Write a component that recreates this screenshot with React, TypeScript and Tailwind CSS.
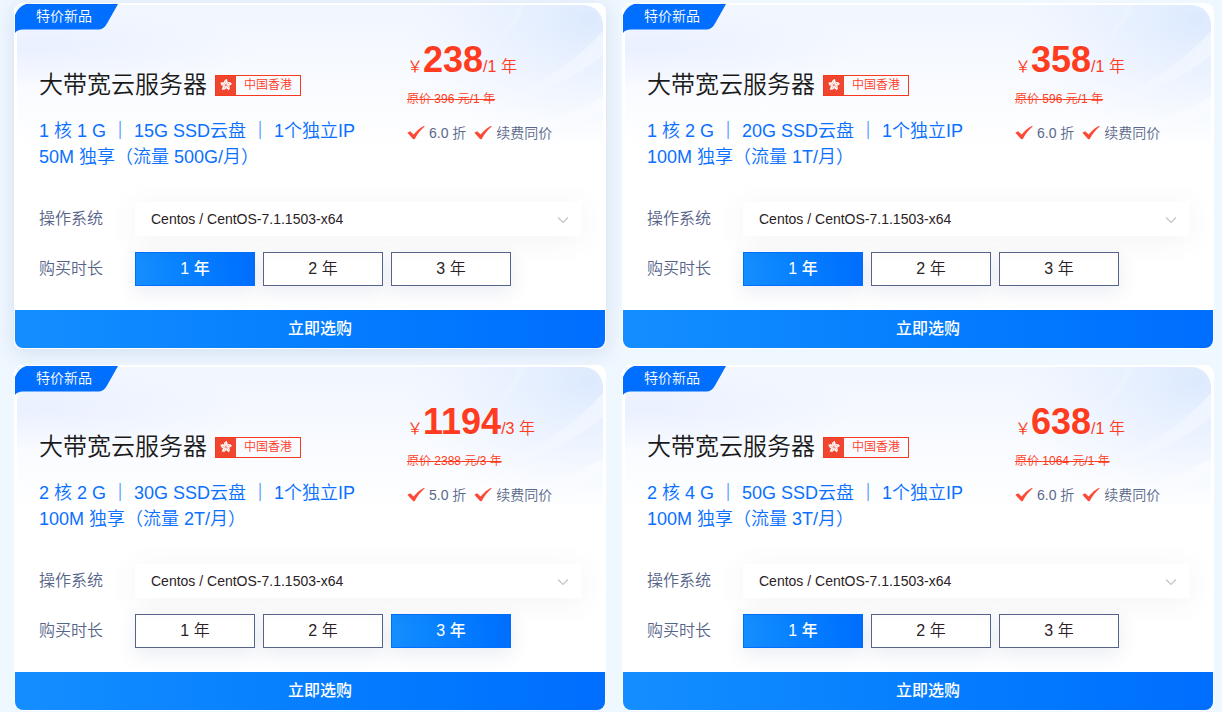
import { useId, useState } from "react";

type Plan = {
    /** Price of the plan. */
    price: number,
    /** Price before the discount. */
    original: number,
    /** Years that are selected at first. */
    years: number,
    discount: string,
    specs: string[],
    traffic: string,
    /** Lifted off the page with a stronger shadow. */
    raised?: boolean,
}

const plans: Plan[] = [
    { price: 238, original: 396, years: 1, discount: "6.0", specs: ["1 核 1 G", "15G SSD云盘", "1个独立IP"], traffic: "50M 独享（流量 500G/月）", raised: true },
    { price: 358, original: 596, years: 1, discount: "6.0", specs: ["1 核 2 G", "20G SSD云盘", "1个独立IP"], traffic: "100M 独享（流量 1T/月）" },
    { price: 1194, original: 2388, years: 3, discount: "5.0", specs: ["2 核 2 G", "30G SSD云盘", "1个独立IP"], traffic: "100M 独享（流量 2T/月）" },
    { price: 638, original: 1064, years: 1, discount: "6.0", specs: ["2 核 4 G", "50G SSD云盘", "1个独立IP"], traffic: "100M 独享（流量 3T/月）" },
];

function CheckMark() {
    return <svg className="h-4 w-[18px] shrink-0" viewBox="0 0 18 16" aria-hidden="true">
        <path d="M0.4 7.8 L3.2 6.2 L6.6 9.6 C9.6 6 13 2.8 17.2 0.8 L17.6 1.6 C13.6 5 10.6 9 7.8 14 L6.2 14.2 Z" fill="#fc4a36"/>
    </svg>
}

function FlagIcon() {
    return <svg className="size-3.5" viewBox="-7 -7 14 14" aria-hidden="true">
        {[0, 72, 144, 216, 288].map((angle) => (
            <g key={angle} transform={`rotate(${angle})`}>
                <path d="M-0.2 -0.4 C-3.2 -1.8 -2.4 -5.4 1.2 -6 C0.2 -5 2.2 -4 1.6 -2.6 C1.2 -1.6 0.4 -1.4 -0.2 -0.4 Z" fill="#fff"/>
                <path d="M-0.2 -1.6 C-0.9 -2.4 -0.8 -3.2 -0.2 -3.8" stroke="#f0452f" strokeWidth="0.4" fill="none"/>
            </g>
        ))}
    </svg>
}

/** Faint light streaks behind the upper half of a card. */
function CardBackdrop() {
    const id = useId();
    return <div className="absolute inset-x-0.5 top-px h-36 overflow-hidden rounded-tr-[20px] bg-linear-to-b from-[#f1f6ff] to-white">
        <svg className="size-full" viewBox="0 0 586 144" preserveAspectRatio="none" aria-hidden="true">
            <defs>
                <radialGradient id={id + "l"}>
                    <stop offset="0" stopColor="#e2ebff" stopOpacity="0.6"/>
                    <stop offset="1" stopColor="#e2ebff" stopOpacity="0"/>
                </radialGradient>
                <radialGradient id={id + "r"} cx="0.92" cy="0.1" r="0.9">
                    <stop offset="0" stopColor="#dae8fe" stopOpacity="0.9"/>
                    <stop offset="0.5" stopColor="#e4eeff" stopOpacity="0.5"/>
                    <stop offset="1" stopColor="#eaf2ff" stopOpacity="0"/>
                </radialGradient>
                <linearGradient id={id + "s"} x1="1" y1="0" x2="0" y2="1">
                    <stop offset="0" stopColor="#fff" stopOpacity="0.45"/>
                    <stop offset="1" stopColor="#fff" stopOpacity="0"/>
                </linearGradient>
            </defs>
            <ellipse cx="20" cy="42" rx="220" ry="42" fill={`url(#${id}l)`}/>
            <rect x="380" width="206" height="144" fill={`url(#${id}r)`}/>
            <path d="M586 26 Q545 72 470 104 Q550 82 586 50 Z" fill={`url(#${id}s)`}/>
            <path d="M586 92 Q540 116 480 128 Q550 122 586 108 Z" fill={`url(#${id}s)`}/>
            <path d="M502 0 Q492 24 472 44 Q500 26 508 0 Z" fill="#fff" opacity="0.15"/>
        </svg>
    </div>
}

function PlanCard({plan}: {plan: Plan}) {
    const [years, setYears] = useState(plan.years);
    const selectId = useId();

    return <article className={"relative rounded-lg border border-white bg-white " + (plan.raised ? "shadow-[0_4px_20px_rgba(90,120,170,0.18)]" : "")}>
        <CardBackdrop/>
        <div className="absolute left-0 top-0 h-[30px] w-[103px]">
            <svg className="absolute inset-0" width="103" height="30" viewBox="0 0 103 30" aria-hidden="true">
                <path d="M11 0 H103 L92 19.5 Q89 25.5 83 25.5 H8 Q2 25.5 0 29 V11 Q3 3 11 0 Z" fill="#006eff"/>
            </svg>
            <span className="relative block pl-[21px] text-[14px] leading-6 text-white">特价新品</span>
        </div>

        <div className="relative px-6 pt-9">
            <div className="grid h-[162px] grid-cols-[minmax(0,1fr)_174px]">
                <div className="pt-[27px]">
                    <div className="flex items-center gap-2">
                        <h2 className="text-[24px] leading-9 text-[#1a1a1a]">大带宽云服务器</h2>
                        <span className="flex h-[21px] items-center border border-[#f9391f] bg-[#fafbff] text-[12px] text-[#fe3a1e]">
                            <span className="flex h-full w-5 items-center justify-center bg-[#f0452f]"><FlagIcon/></span>
                            <span className="px-2">中国香港</span>
                        </span>
                    </div>
                    <p className="mt-[15px] text-[18px] leading-[26px] text-[#0a70ff]">
                        {plan.specs.map((spec, i) => (
                            <span key={spec}>{i > 0 && <span className="font-medium"> ｜ </span>}{spec}</span>
                        ))}
                        <br/>{plan.traffic}
                    </p>
                </div>
                <div className="whitespace-nowrap">
                    <p className="text-[16px] leading-10 text-[#ff3b20]">
                        <span>￥</span><strong className="text-[36px] font-bold">{plan.price}</strong>/{plan.years} 年
                    </p>
                    <p className="mt-0.5 text-[12px] leading-5 text-[#ff3b20]">
                        <del>原价 {plan.original} 元/{plan.years} 年</del>
                    </p>
                    <ul className="mt-3 flex gap-2 text-[14px] leading-6 text-[#5a678a]">
                        <li className="flex items-center gap-1"><CheckMark/>{plan.discount} 折</li>
                        <li className="flex items-center gap-1"><CheckMark/>续费同价</li>
                    </ul>
                </div>
            </div>

            <div className="flex items-center text-[16px] text-[#56648a]">
                <label htmlFor={selectId} className="w-24 shrink-0">操作系统</label>
                <div className="relative grow">
                    <select id={selectId} className="h-[34px] w-full appearance-none bg-white px-4 text-[14px] text-[#2b2225] shadow-[0_4px_30px_rgba(80,80,90,0.07)]">
                        <option>Centos / CentOS-7.1.1503-x64</option>
                    </select>
                    <svg className="pointer-events-none absolute right-3 top-3 h-3 w-3" viewBox="0 0 12 12" aria-hidden="true">
                        <path d="M1 3.5 L6 8.5 L11 3.5" stroke="#c0c4cc" strokeWidth="1.2" fill="none"/>
                    </svg>
                </div>
            </div>

            <div className="mt-4 flex items-center text-[16px] text-[#56648a]">
                <span className="w-24 shrink-0">购买时长</span>
                <div className="flex gap-2">
                    {[1, 2, 3].map((n) => (
                        <button
                            key={n}
                            type="button"
                            aria-pressed={n == years}
                            onClick={() => setYears(n)}
                            className={"h-[34px] w-[120px] border shadow-[0_6px_20px_rgba(80,100,160,0.12)] " + (n == years
                                ? "border-[#006eff] bg-linear-to-r from-[#148eff] to-[#006eff] font-medium text-white"
                                : "border-[#56648a] bg-white text-[#2b2225]")}
                        >{n} 年</button>
                    ))}
                </div>
            </div>
        </div>

        <button type="button" className="relative mt-6 block h-[38px] w-full rounded-b-lg bg-linear-to-r from-[#148eff] to-[#006eff] pl-5 text-[16px] font-medium text-white">立即选购</button>
    </article>
}

export default function App() {
    return <main className="grid grid-cols-2 gap-4 bg-[#eff7ff] pb-px pl-3.5 pr-2 pt-[3px] font-['Liberation_Sans','Noto_Sans_CJK_SC',sans-serif] font-[350]">
        {plans.map((plan) => <PlanCard key={plan.price} plan={plan}/>)}
    </main>
}
